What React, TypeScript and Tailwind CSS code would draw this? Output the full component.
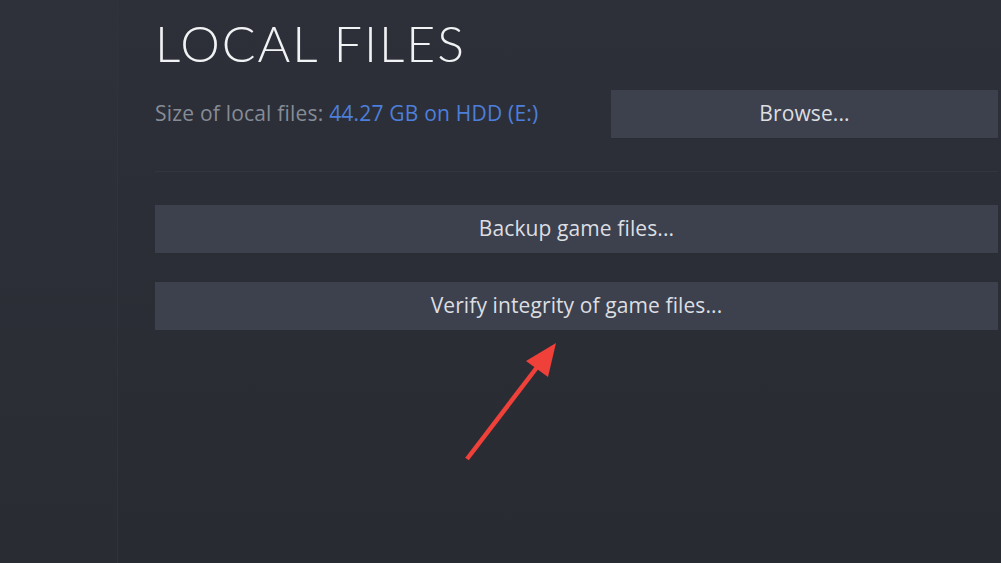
import React from 'react';

const font = { fontFamily: '"Open Sans", Lato, sans-serif' };

function SteamButton({ label, className = '' }: { label: string; className?: string }) {
  return (
    <button
      className={`h-[48px] bg-[#3d414d] text-[#dcdee2] text-[21px] tracking-[0.1px] flex items-center justify-center shadow-[0_1px_0_#2a2d33] ${className}`}
    >
      {label}
    </button>
  );
}

export default function App() {
  return (
    <div className="relative w-[1001px] h-[563px] overflow-hidden flex bg-[#2b2e36]" style={font}>
      {/* left sidebar */}
      <aside className="w-[118px] h-full bg-gradient-to-b from-[#2e313a] to-[#2a2c33] border-r border-[#30333c]" />

      {/* main panel */}
      <main className="flex-1 h-full bg-gradient-to-b from-[#2d3039] to-[#292b32] pl-[37px] pr-[3px]">
        <h1
          className="mt-[17px] h-[52px] text-[50px] leading-[52px] font-light tracking-[2px] text-[#f1f2f4]"
          style={{ fontFamily: 'Lato, sans-serif' }}
        >
          LOCAL FILES
        </h1>

        <div className="mt-[21px] flex items-center">
          <p className="flex-1 text-[21px] tracking-[0.2px] text-[#868c96]">
            Size of local files: <span className="text-[#4c7fdb]">44.27 GB on HDD (E:)</span>
          </p>
          <SteamButton label="Browse..." className="w-[387px]" />
        </div>

        <div className="mt-[33px] h-px bg-[#33363f]" />

        <div className="mt-[33px] flex flex-col gap-[29px]">
          <SteamButton label="Backup game files..." />
          <SteamButton label="Verify integrity of game files..." />
        </div>
      </main>

      {/* annotation arrow */}
      <svg className="absolute left-0 top-0 pointer-events-none" width="1001" height="563">
        <line x1="467" y1="459" x2="538" y2="366" stroke="#f0403a" strokeWidth="4.5" />
        <polygon points="556,343 526,361 548,377" fill="#f0403a" />
      </svg>
    </div>
  );
}
